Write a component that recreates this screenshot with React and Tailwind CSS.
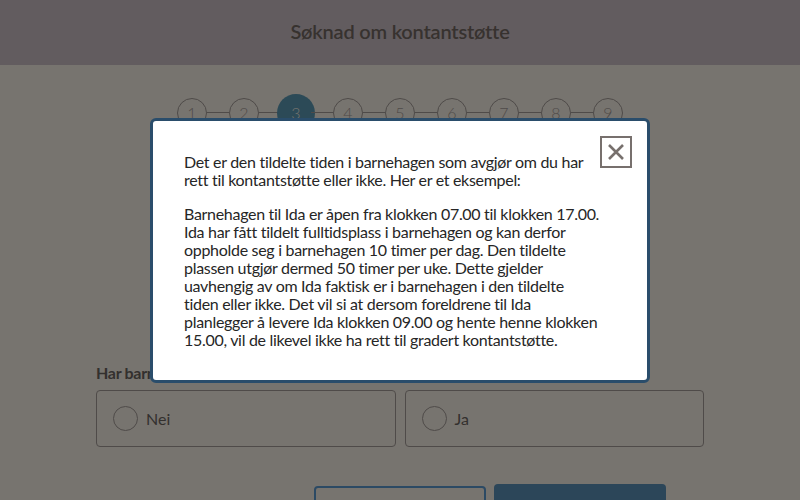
import React from "react";

const steps = [1, 2, 3, 4, 5, 6, 7, 8, 9];

export default function App() {
  return (
    <div
      className="relative w-[800px] h-[500px] overflow-hidden bg-[#77746f]"
      style={{ fontFamily: "Lato, 'Open Sans', sans-serif" }}
    >
      <header className="h-[65px] bg-[#625c5f] flex items-center justify-center pb-[3px]">
        <h1 className="text-[20px] font-semibold text-[#37322f] tracking-[-0.2px]">Søknad om kontantstøtte</h1>
      </header>

      <div className="w-[608px] mx-auto">
        <div className="flex items-center justify-center pt-[29px] h-[66px]">
          {steps.map((n, i) => (
            <React.Fragment key={n}>
              {i > 0 && <div className="w-[22px] h-px bg-[#4f4b49]" />}
              {n === 3 ? (
                <div className="w-[38px] h-[38px] -mx-[4px] rounded-full bg-[#2c4a57] flex items-center justify-center text-[16px] text-[#77746f] font-light">
                  {n}
                </div>
              ) : (
                <div className="w-[30px] h-[30px] rounded-full border border-[#4f4b49] flex items-center justify-center text-[16px] text-[#4f4b49] font-light">
                  {n}
                </div>
              )}
            </React.Fragment>
          ))}
        </div>

        <div className="h-[232px]" />

        <p className="text-[16px] font-bold text-[#33302e] leading-[20px] tracking-[-0.3px] whitespace-nowrap">
          Har barnet fått tildelt plass i barnehage?
        </p>

        <div className="mt-[7px] flex gap-[9px]">
          {["Nei", "Ja"].map((l) => (
            <div key={l} className="flex-1 h-[57px] border border-[#4f4b49] rounded-[4px] flex items-center pl-[16px]">
              <div className="w-[25px] h-[25px] rounded-full border border-[#4f4b49]" />
              <span className="ml-[8px] text-[16px] text-[#33302e]">{l}</span>
            </div>
          ))}
        </div>

        <div className="mt-[39px] flex justify-end gap-[8px] pr-[38px]">
          <div className="w-[172px] h-[40px] border-2 border-[#2c4a64] rounded-[4px]" />
          <div className="w-[172px] h-[40px] -mt-[2px] bg-[#2c4659] rounded-[4px]" />
        </div>
      </div>

      <div className="absolute left-[150px] top-[118px] w-[500px] h-[265px] bg-white border-[3px] border-[#2a4d6b] rounded-[6px]">
        <button className="absolute right-[15px] top-[15px] w-[32px] h-[32px] border-2 border-[#77706d] flex items-center justify-center">
          <svg width="18" height="18" viewBox="0 0 18 18">
            <path d="M2 2L16 16M16 2L2 16" stroke="#77706d" strokeWidth="2.6" />
          </svg>
        </button>
        <div className="pl-[31px] pt-[32px] text-[16px] leading-[18px] text-[#262626] tracking-[-0.3px] whitespace-nowrap">
          <p>
            Det er den tildelte tiden i barnehagen som avgjør om du har
            <br />
            rett til kontantstøtte eller ikke. Her er et eksempel:
          </p>
          <p className="mt-[16px]">
            Barnehagen til Ida er åpen fra klokken 07.00 til klokken 17.00.
            <br />
            Ida har fått tildelt fulltidsplass i barnehagen og kan derfor
            <br />
            oppholde seg i barnehagen 10 timer per dag. Den tildelte
            <br />
            plassen utgjør dermed 50 timer per uke. Dette gjelder
            <br />
            uavhengig av om Ida faktisk er i barnehagen i den tildelte
            <br />
            tiden eller ikke. Det vil si at dersom foreldrene til Ida
            <br />
            planlegger å levere Ida klokken 09.00 og hente henne klokken
            <br />
            15.00, vil de likevel ikke ha rett til gradert kontantstøtte.
          </p>
        </div>
      </div>
    </div>
  );
}
